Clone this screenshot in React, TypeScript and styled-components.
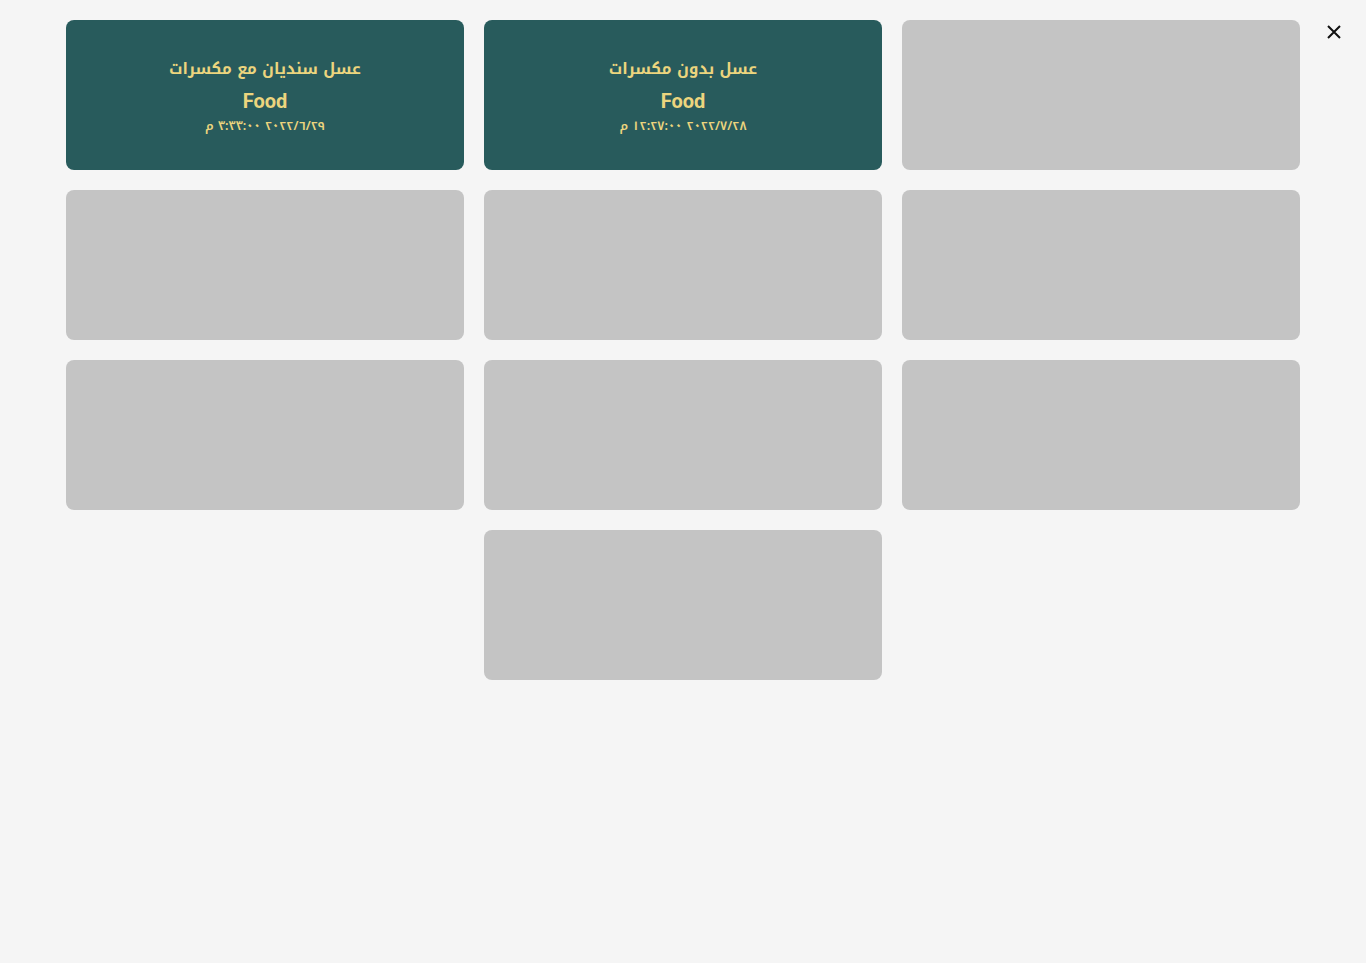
import React from "react";
import styled, { createGlobalStyle } from "styled-components";

const Global = createGlobalStyle`
  html, body { margin: 0; padding: 0; background: #f5f5f5; }
  body { font-family: Roboto, "Noto Kufi Arabic", sans-serif; }
`;

const Page = styled.div`
  position: relative;
  min-height: 963px;
  padding: 20px 66px;
  box-sizing: border-box;
`;

const Grid = styled.div`
  display: flex;
  flex-wrap: wrap;
  justify-content: center;
  gap: 20px;
`;

const Card = styled.div<{ $filled?: boolean }>`
  width: 398px;
  height: 150px;
  box-sizing: border-box;
  border-radius: 8px;
  background: ${(p) => (p.$filled ? "#285b5c" : "#c4c4c4")};
  display: flex;
  flex-direction: column;
  align-items: center;
  justify-content: center;
  color: #ecd57e;
  direction: rtl;
`;

const Title = styled.div`
  font-family: "Noto Kufi Arabic", sans-serif;
  font-weight: bold;
  font-size: 15.6px;
  line-height: 28px;
`;

const Category = styled.div`
  font-family: Roboto, sans-serif;
  font-weight: bold;
  font-size: 20px;
  line-height: 28px;
  margin-top: 4px;
`;

const DateText = styled.div`
  font-family: "Noto Kufi Arabic", sans-serif;
  font-size: 12.5px;
  font-weight: 600;
  line-height: 18px;
  margin-top: 2px;
`;

const Close = styled.button`
  position: absolute;
  top: 22px;
  right: 22px;
  width: 20px;
  height: 20px;
  padding: 0;
  border: 0;
  background: transparent;
  cursor: pointer;
  display: flex;
  align-items: center;
  justify-content: center;
`;

const items = [
  { title: "عسل سنديان مع مكسرات", cat: "Food", date: "٢٩‏/٦‏/٢٠٢٢ ٣:٣٣:٠٠ م" },
  { title: "عسل بدون مكسرات", cat: "Food", date: "٢٨‏/٧‏/٢٠٢٢ ١٢:٢٧:٠٠ م" },
];

export default function App() {
  const cards = Array.from({ length: 10 }, (_, i) => items[i]);
  return (
    <Page>
      <Global />
      <Grid>
        {cards.map((it, i) =>
          it ? (
            <Card key={i} $filled>
              <Title>{it.title}</Title>
              <Category>{it.cat}</Category>
              <DateText>{it.date}</DateText>
            </Card>
          ) : (
            <Card key={i} />
          )
        )}
      </Grid>
      <Close aria-label="close">
        <svg width="14" height="14" viewBox="0 0 14 14">
          <path d="M1 1L13 13M13 1L1 13" stroke="#111" strokeWidth="2" />
        </svg>
      </Close>
    </Page>
  );
}
